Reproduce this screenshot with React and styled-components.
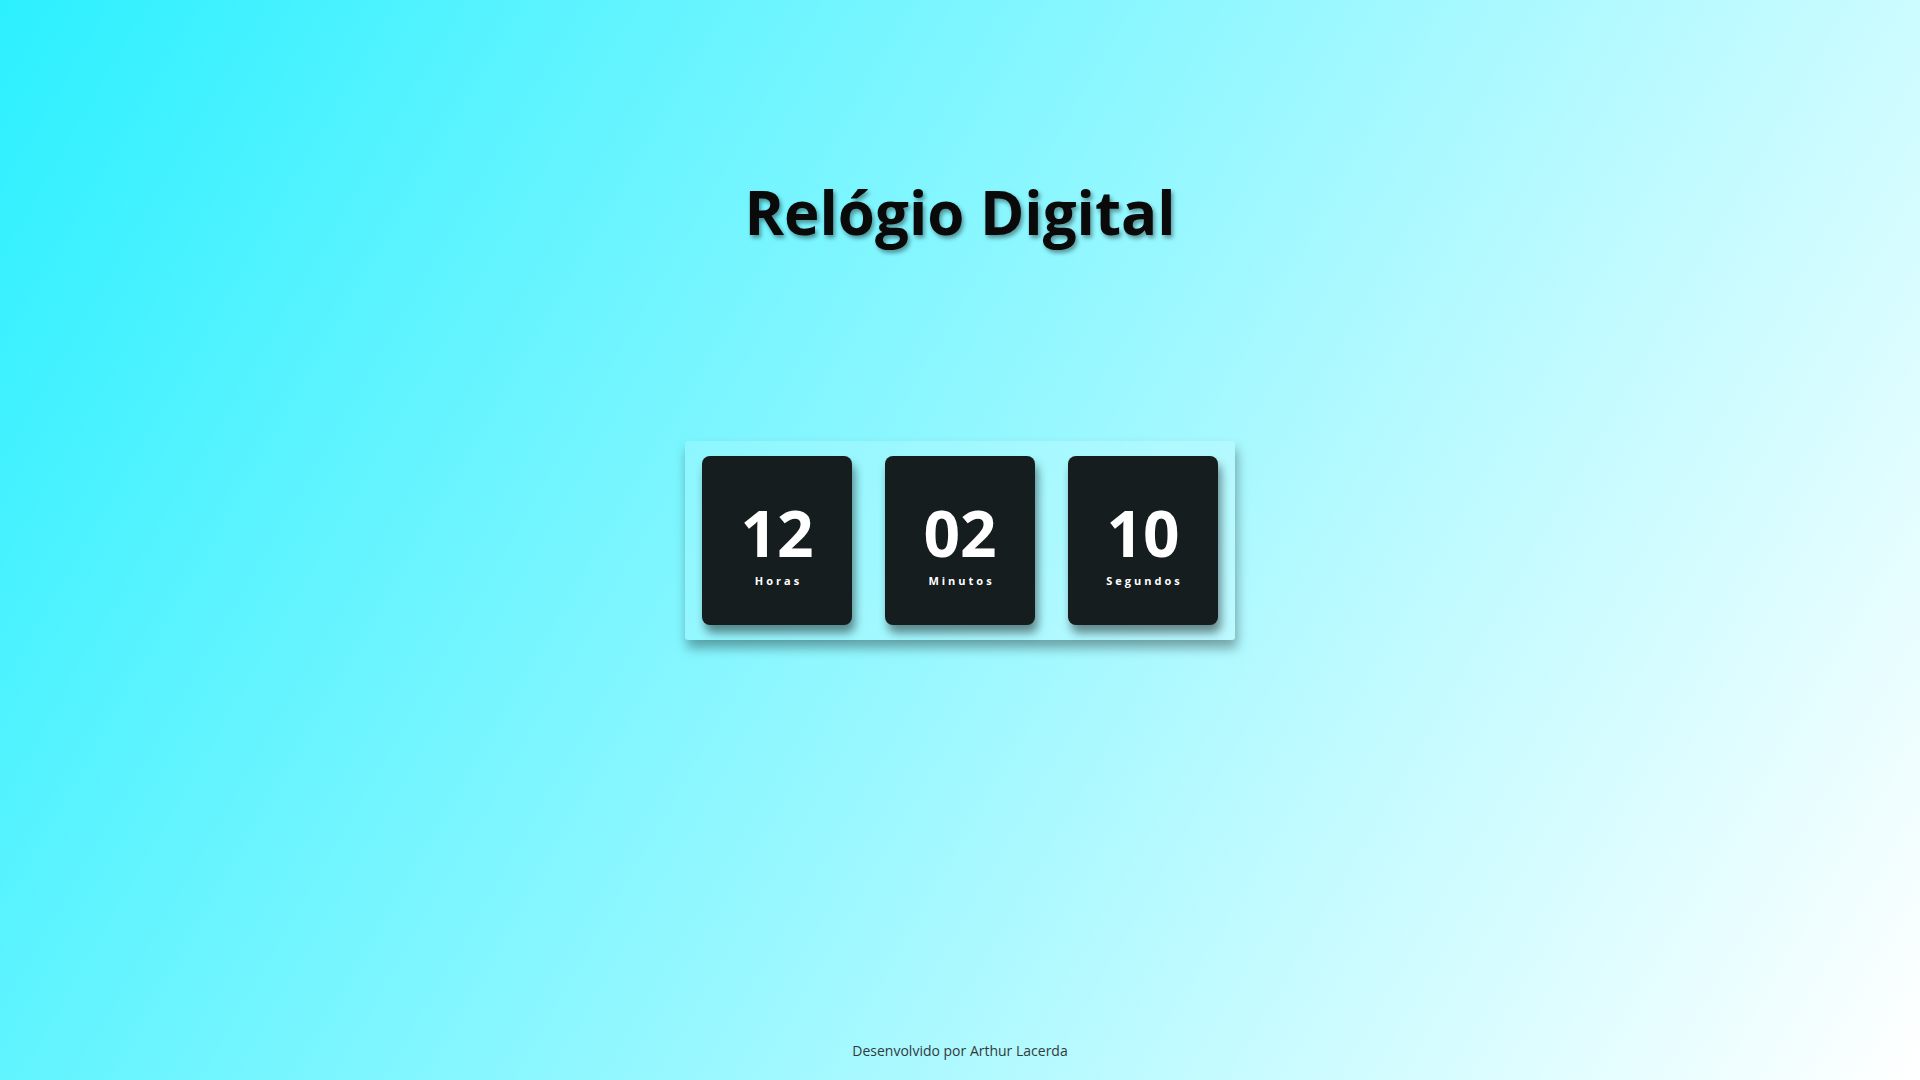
import styled, { createGlobalStyle } from "styled-components";

const GlobalStyle = createGlobalStyle`
  * {
    box-sizing: border-box;
  }
  body {
    margin: 0;
    font-family: "Open Sans", "Noto Sans", sans-serif;
  }
`;

const units = [
  { value: "12", label: "Horas" },
  { value: "02", label: "Minutos" },
  { value: "10", label: "Segundos" },
];

const App = () => {
  return (
    <>
      <GlobalStyle />
      <Page>
        <Header>
          <Title>Relógio Digital</Title>
        </Header>
        <Clock>
          {units.map((unit) => (
            <Card key={unit.label}>
              <Number>{unit.value}</Number>
              <Label>{unit.label}</Label>
            </Card>
          ))}
        </Clock>
        <Footer>Desenvolvido por Arthur Lacerda</Footer>
      </Page>
    </>
  );
};

const Page = styled.div`
  min-height: 100vh;
  display: grid;
  grid-template-rows: 1fr auto 1fr;
  justify-items: center;
  background: linear-gradient(120deg, #2cf0ff 0%, #ffffff 100%);
`;

const Header = styled.header`
  align-self: start;
  padding-top: 171px;
`;

const Title = styled.h1`
  margin: 0;
  font-size: 60px;
  font-weight: 700;
  color: #0a0a0a;
  text-shadow: 2px 3px 4px rgba(0, 0, 0, 0.4);
`;

const Clock = styled.main`
  display: flex;
  gap: 33px;
  padding: 15px 17px;
  background: rgba(255, 255, 255, 0.14);
  border-radius: 3px;
  box-shadow: 2px 8px 12px rgba(0, 0, 0, 0.35);
`;

const Card = styled.div`
  width: 150px;
  height: 169px;
  display: flex;
  flex-direction: column;
  align-items: center;
  justify-content: center;
  padding-top: 6px;
  background: #151d1f;
  border-radius: 8px;
  box-shadow: 3px 8px 10px rgba(0, 0, 0, 0.45);
`;

const Number = styled.span`
  font-size: 64px;
  font-weight: 700;
  line-height: 1;
  color: #ffffff;
  margin-bottom: 10px;
`;

const Label = styled.span`
  font-size: 11px;
  font-weight: 700;
  line-height: 1;
  letter-spacing: 3px;
  padding-left: 3px;
  color: #ffffff;
`;

const Footer = styled.footer`
  align-self: end;
  padding-bottom: 20px;
  font-size: 14px;
  color: #333a3c;
`;

export default App;
